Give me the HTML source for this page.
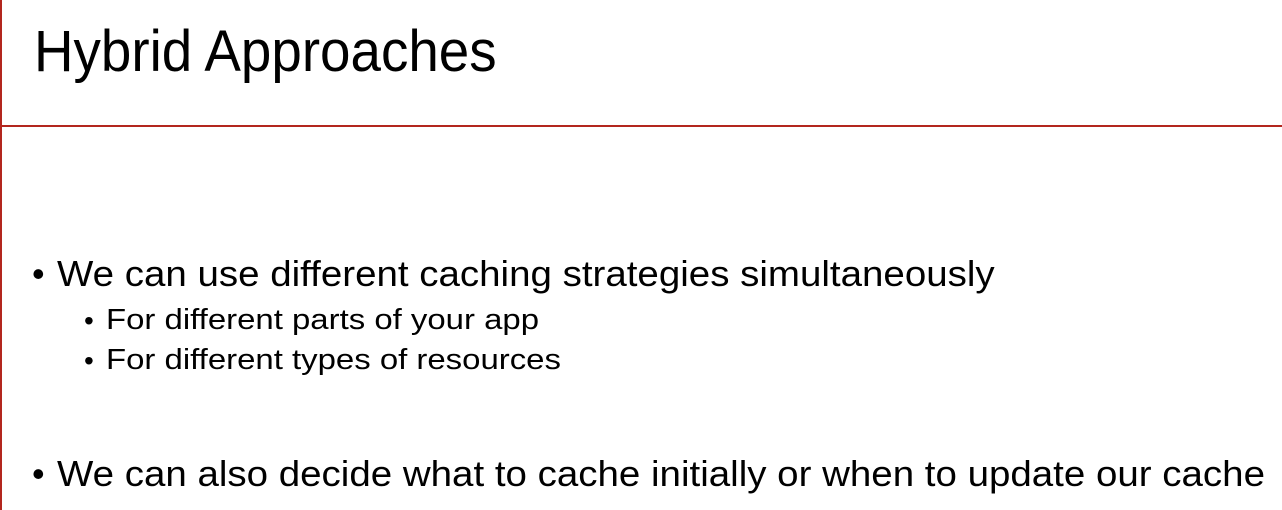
<!DOCTYPE html>
<html><head><style>
html,body{margin:0;padding:0;background:#fff;}
body{width:1282px;height:510px;position:relative;overflow:hidden;font-family:"Liberation Sans",sans-serif;color:#000;}
.vl{position:absolute;left:0;top:0;width:2px;height:510px;background:#b3261e;}
.hl{position:absolute;left:0;top:125px;width:1282px;height:2px;background:#b3261e;}
.t{position:absolute;white-space:nowrap;transform-origin:0 0;}
#title{left:34px;top:18px;font-size:58px;transform:scaleX(0.944);}
.b1{font-size:36px;transform:scaleX(1.069);}
.b2{font-size:29px;transform:scaleX(1.135);}
</style></head><body>
<div class="vl"></div><div class="hl"></div>
<div id="title" class="t">Hybrid Approaches</div>
<div class="t" style="left:32px;top:253px;font-size:36px">•</div>
<div class="t b1" style="left:57px;top:253px">We can use different caching strategies simultaneously</div>
<div class="t" style="left:84px;top:305px;font-size:28px">•</div>
<div class="t b2" style="left:106px;top:304px">For different parts of your app</div>
<div class="t" style="left:84px;top:345px;font-size:28px">•</div>
<div class="t b2" style="left:106px;top:344px">For different types of resources</div>
<div class="t" style="left:32px;top:453px;font-size:36px">•</div>
<div class="t b1" style="left:57px;top:453px">We can also decide what to cache initially or when to update our cache</div>
</body></html>
